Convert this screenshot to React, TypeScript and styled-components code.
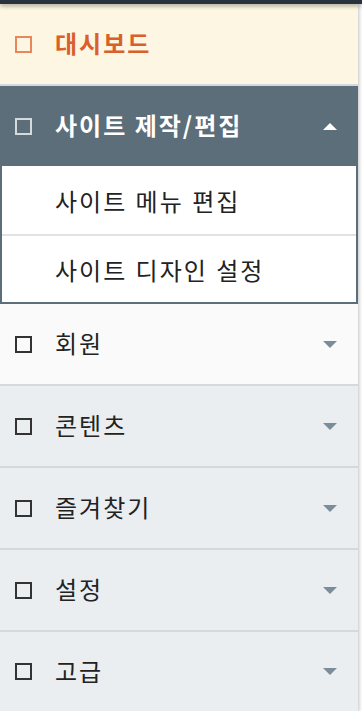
import React from "react";
import styled, { createGlobalStyle } from "styled-components";

const GlobalStyle = createGlobalStyle`
	html, body {
		margin: 0;
		padding: 0;
		background: #ffffff;
		font-family: "Noto Sans CJK KR", "Noto Sans", sans-serif;
	}
`;

type Tone = "active" | "open" | "light" | "plain";

const rowBg: Record<Tone, string> = {
	active: "#fdf6e2",
	open: "#5b6e79",
	light: "#fafafa",
	plain: "#eaeef1",
};

const rowColor: Record<Tone, string> = {
	active: "#d9602a",
	open: "#ffffff",
	light: "#222222",
	plain: "#222222",
};

const boxColor: Record<Tone, string> = {
	active: "#e8875c",
	open: "#d6dadc",
	light: "#333333",
	plain: "#333333",
};

const menus = ["회원", "콘텐츠", "즐겨찾기", "설정", "고급"];
const subItems = ["사이트 메뉴 편집", "사이트 디자인 설정"];

export default function App() {
	return (
		<>
			<GlobalStyle />
			<TopBar />
			<Panel>
				<Row tone="active">
					<Box tone="active" />
					<Label tone="active" bold>
						대시보드
					</Label>
				</Row>
				<Row tone="open">
					<Box tone="open" />
					<Label tone="open" bold>
						사이트 제작/편집
					</Label>
					<Caret up color="#ffffff" />
				</Row>
				<SubMenu>
					{subItems.map((s) => (
						<SubItem key={s}>{s}</SubItem>
					))}
				</SubMenu>
				{menus.map((m, i) => {
					const tone: Tone = i === 0 ? "light" : "plain";
					return (
						<Row key={m} tone={tone}>
							<Box tone={tone} />
							<Label tone={tone}>{m}</Label>
							<Caret color="#7b8d99" />
						</Row>
					);
				})}
			</Panel>
		</>
	);
}

const TopBar = styled.div`
	position: relative;
	z-index: 2;
	height: 4px;
	background: #29333c;
	box-shadow: 0 2px 4px rgba(0, 0, 0, 0.35);
`;

const Panel = styled.nav`
	width: 358px;
	display: flex;
	flex-direction: column;
	box-shadow: 1px 1px 4px rgba(0, 0, 0, 0.25);
`;

const Row = styled.div<{ tone: Tone }>`
	display: flex;
	align-items: center;
	height: 80px;
	padding: 0 21px 0 15px;
	box-sizing: content-box;
	background: ${(p) => rowBg[p.tone]};
	border-bottom: ${(p) => (p.tone === "open" ? "none" : "2px solid #d3d9dc")};
	&:last-child {
		border-bottom: none;
		height: 79px;
	}
`;

const Box = styled.span<{ tone: Tone }>`
	width: 13px;
	height: 13px;
	flex: none;
	border: 2px solid ${(p) => boxColor[p.tone]};
	margin-right: 23px;
`;

const Label = styled.span<{ tone: Tone; bold?: boolean }>`
	flex: 1;
	font-size: 24px;
	font-weight: ${(p) => (p.bold ? 700 : 400)};
	color: ${(p) => rowColor[p.tone]};
	letter-spacing: 2px;
	margin-top: -3px;
`;

const Caret = styled.span<{ up?: boolean; color: string }>`
	width: 0;
	height: 0;
	border-left: 7px solid transparent;
	border-right: 7px solid transparent;
	${(p) => (p.up ? `border-bottom: 7px solid ${p.color};` : `border-top: 7px solid ${p.color};`)}
`;

const SubMenu = styled.div`
	display: flex;
	flex-direction: column;
	background: #ffffff;
	border: 2px solid #5b6e79;
	border-top: none;
`;

const SubItem = styled.div`
	display: flex;
	align-items: center;
	height: 68px;
	padding-left: 53px;
	font-size: 24px;
	letter-spacing: 2px;
	word-spacing: 1px;
	color: #222222;
	& + & {
		border-top: 2px solid #e2e2e2;
		height: 66px;
	}
`;
